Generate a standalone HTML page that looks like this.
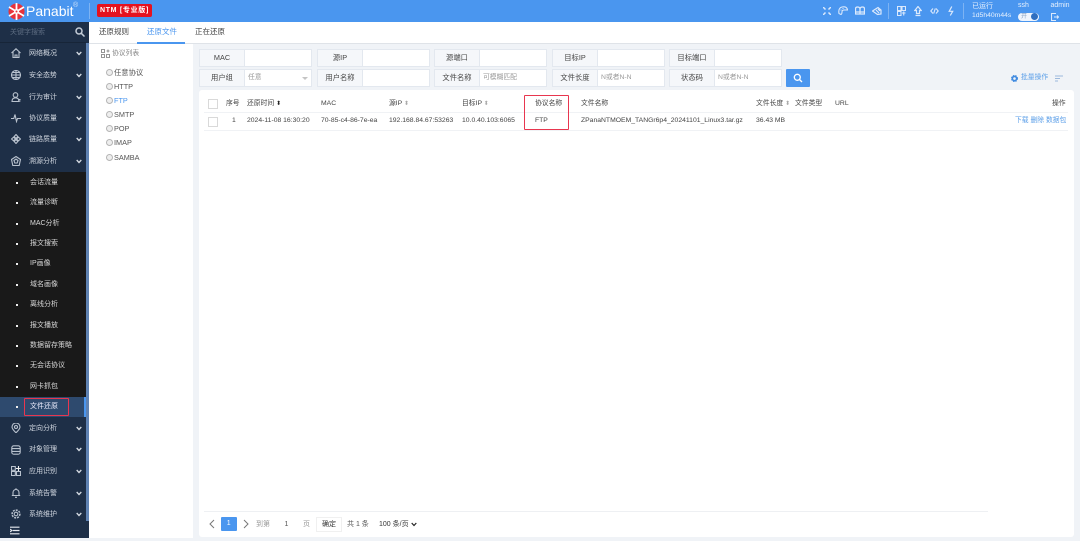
<!DOCTYPE html>
<html lang="zh"><head><meta charset="utf-8"><title>Panabit</title>
<style>
*{box-sizing:border-box}
html,body{margin:0;padding:0;width:1080px;height:541px;overflow:hidden;background:#f0f3f7;font-family:"Liberation Sans","Noto Sans CJK SC",sans-serif;font-size:7.5px;color:#444}
#w{position:absolute;left:0;top:0;width:1080px;height:541px;background:#f0f3f7;overflow:hidden;filter:blur(.35px)}
.a{position:absolute;white-space:nowrap;line-height:1}
.lab{position:absolute;background:#f5f7fa;border:1px solid #e3e8ef;text-align:center;color:#444;font-size:7.3px;width:46px}
.r1{top:49px;height:17.500px;line-height:15.500px}
.r2{top:69px;height:18px;line-height:16px}
.inp{position:absolute;background:#fff;border:1px solid #e3e8ef;color:#999;padding-left:3px;font-size:6.800px;width:68px}
.m{position:absolute;left:29px;color:#d0d6df;font-size:7px;line-height:1;white-space:nowrap}
.s{position:absolute;left:30px;color:#d8d8d8;font-size:7px;line-height:1;white-space:nowrap}
.dot{position:absolute;left:16px;width:2px;height:2px;background:#eee}
.ic{position:absolute;left:11px;width:10px;height:10px;fill:none;stroke:#b9c2ce;stroke-width:1.100}
.ch{position:absolute;left:75.500px;width:6px;height:5px;fill:none;stroke:#d5dbe3;stroke-width:1.300}
.p{position:absolute;left:114px;font-size:7.300px;color:#555;line-height:1}
.pc{position:absolute;left:106px;width:7px;height:7px;border:1px solid #b5b5b5;border-radius:50%;background:#eee}
.th{position:absolute;top:100.500px;font-size:6.800px;color:#444;line-height:1;white-space:nowrap}
.td{position:absolute;top:118.300px;font-size:6.800px;color:#444;line-height:1;white-space:nowrap}
.hi{position:absolute;fill:none;stroke:#dbe9fc;stroke-width:1.100}
.srt{color:#aaa;font-size:6px}
</style></head><body><div id="w">

<!-- header -->
<div class="a" style="left:0;top:0;width:1080px;height:22.500px;background:#4a96ef"></div>
<svg class="a" style="left:8px;top:2.500px" width="17" height="17" viewBox="0 0 17 17">
<circle cx="8.500" cy="8.500" r="8" fill="#e8323c"/>
<path d="M8.500 8.500L8.500 0M8.500 8.500L1 4M8.500 8.500L16 4M8.500 8.500L1 13M8.500 8.500L16 13M8.500 8.500L8.500 17" stroke="#fff" stroke-width="1.800" fill="none"/>
<circle cx="8.500" cy="8.500" r="2.500" fill="#fff"/><circle cx="8.500" cy="8.500" r="1" fill="#e8323c"/></svg>
<div class="a" style="left:26px;top:4px;color:#fff;font-size:14px">Panabit</div>
<div class="a" style="left:73px;top:1.500px;color:#cfe2fa;font-size:7px">®</div>
<div class="a" style="left:89px;top:3px;width:1px;height:16px;background:#7db3f3"></div>
<div class="a" style="left:97px;top:4px;width:55px;height:13px;background:#e5121f;border-radius:2px;color:#fff;font-size:7px;line-height:13px;text-align:center;letter-spacing:.7px;font-weight:bold">NTM [专业版]</div>

<svg class="hi" style="left:823px;top:7px" width="8" height="8" viewBox="0 0 8 8"><path d="M0 0l2.500 2.500M8 0L5.500 2.500M0 8l2.500-2.500M8 8L5.500 5.500" stroke-width="1.500"/></svg>
<svg class="hi" style="left:838px;top:6px" width="10" height="9" viewBox="0 0 10 9"><path d="M1 7.500Q0 2 4 1q5-1 5.500 3H6Q4 4 4 6t-1 2.500z"/><path d="M2.500 4h1M4.500 2.500h1"/></svg>
<svg class="hi" style="left:855px;top:6px" width="10" height="9" viewBox="0 0 10 9"><path d="M.5 8V3Q.5 1 2.500 1 4.500 1 5 2.500 5.500 1 7.500 1 9.500 1 9.500 3v5H.5zM5 2.500V8M.5 6h9" stroke-width="1.300"/></svg>
<svg class="hi" style="left:872px;top:6px" width="10" height="10" viewBox="0 0 10 10"><path d="M.5 5L6 1.500l3 2.500v4L5.500 8.500zM4 4l3 3M6 3l2 2" stroke-width="1.200"/></svg>
<div class="a" style="left:888px;top:3px;width:1px;height:16px;background:#7db3f3"></div>
<svg class="hi" style="left:897px;top:6px" width="9" height="10" viewBox="0 0 9 10"><path d="M.5.500h3.500v4H.5zM5 .5h3.500v4H5zM.5 5.500h3.500V9.500H.5zM5 7h3.500M6.750 5.500v4"/></svg>
<svg class="hi" style="left:914px;top:5.500px" width="8" height="11" viewBox="0 0 8 11"><path d="M4 .5L.8 4.500H2.500V7.500h3V4.500h1.700zM1.500 9.500h5" stroke-width="1.200"/></svg>
<svg class="hi" style="left:930px;top:7px" width="9" height="8" viewBox="0 0 9 8"><path d="M3 1.500L.8 4 3 6.500M6 1.500L8.200 4 6 6.500M5.300 1.500L3.700 6.500"/></svg>
<svg class="hi" style="left:947.500px;top:6px" width="6" height="10" viewBox="0 0 6 10"><path d="M3.800.5L1.200 5.300h3.500L2.300 9.500" stroke-width="1.200"/></svg>
<div class="a" style="left:963px;top:3px;width:1px;height:16px;background:#7db3f3"></div>
<div class="a" style="left:972px;top:2.500px;color:#e6f0fd;font-size:7px">已运行</div>
<div class="a" style="left:972px;top:13.300px;color:#e6f0fd;font-size:6.800px">1d5h40m44s</div>
<div class="a" style="left:1018px;top:1.500px;color:#e6f0fd;font-size:7px">ssh</div>
<div class="a" style="left:1018px;top:13px;width:20.500px;height:7.500px;background:#eef4fd;border-radius:4px"></div>
<div class="a" style="left:1021px;top:13.500px;color:#7f9dc2;font-size:6px">开</div>
<div class="a" style="left:1031px;top:13.300px;width:7px;height:7px;background:#2f6fc0;border-radius:50%"></div>
<div class="a" style="left:1050.500px;top:1.500px;color:#e6f0fd;font-size:7px">admin</div>
<svg class="hi" style="left:1051px;top:12.500px" width="8" height="8" viewBox="0 0 8 8"><path d="M5 .5H.5v7H5M3 4h4.500M6 2.500L7.500 4 6 5.500"/></svg>

<!-- sidebar -->
<div class="a" style="left:0;top:22px;width:89px;height:516px;background:#1e2f47"></div>
<div class="a" style="left:0;top:42px;width:86px;height:1px;background:#172538"></div>
<div class="a" style="left:86px;top:43px;width:3px;height:478px;background:#5f82b2"></div>
<div class="a" style="left:10px;top:28.500px;color:#5c6b80;font-size:7px">关键字搜索</div>
<svg class="a" style="left:74.500px;top:27px" width="10" height="10" viewBox="0 0 10 10" fill="none" stroke="#c5cdd8" stroke-width="1.500"><circle cx="4" cy="4" r="3"/><path d="M6.300 6.300L9.500 9.500"/></svg>

<svg class="ic" style="top:48px" viewBox="0 0 10 10"><path d="M.5 5L5 .8 9.500 5M2 4v5.500h6V4M4 9.500V7h2v2.500"/></svg>
<div class="m" style="top:50px">网络概况</div><svg class="ch" style="top:51px" viewBox="0 0 6 5"><path d="M.7 1L3 3.500 5.300 1"/></svg>
<svg class="ic" style="top:70px" viewBox="0 0 10 10"><circle cx="5" cy="5" r="4.500"/><path d="M.5 5h9M5 .5v9M1.500 2.500h7M1.500 7.500h7"/></svg>
<div class="m" style="top:71.500px">安全态势</div><svg class="ch" style="top:72.500px" viewBox="0 0 6 5"><path d="M.7 1L3 3.500 5.300 1"/></svg>
<svg class="ic" style="top:92px" viewBox="0 0 10 10"><circle cx="4.500" cy="3" r="2.300"/><path d="M1 9.500Q1 5.800 4.500 5.800T8 9.500zM7 7.500h2.500M7 9h2.500"/></svg>
<div class="m" style="top:93.500px">行为审计</div><svg class="ch" style="top:94.500px" viewBox="0 0 6 5"><path d="M.7 1L3 3.500 5.300 1"/></svg>
<svg class="ic" style="top:113px" viewBox="0 0 10 10"><path d="M0 5.500h2.800L4 1.500l1.500 7 1-3H10"/></svg>
<div class="m" style="top:114.500px">协议质量</div><svg class="ch" style="top:115.500px" viewBox="0 0 6 5"><path d="M.7 1L3 3.500 5.300 1"/></svg>
<svg class="ic" style="top:134px" viewBox="0 0 10 10"><path d="M5 .5l1.800 2L5 4.500 3.200 2.500zM.5 5l2-1.800L4.500 5 2.500 6.800zM9.500 5l-2-1.800L5.500 5l2 1.800zM5 9.500l1.800-2L5 5.500 3.200 7.500z"/></svg>
<div class="m" style="top:136px">链路质量</div><svg class="ch" style="top:137px" viewBox="0 0 6 5"><path d="M.7 1L3 3.500 5.300 1"/></svg>
<svg class="ic" style="top:156px" viewBox="0 0 10 10"><path d="M5 .5l4.500 3-1.300 6H1.800L.5 3.500z"/><path d="M3 4.500l2-1.500 2 1.500-.8 2.500H3.800z"/></svg>
<div class="m" style="top:157.500px">溯源分析</div><svg class="ch" style="top:158.500px" viewBox="0 0 6 5"><path d="M.7 1L3 3.500 5.300 1"/></svg>

<div class="a" style="left:0;top:172px;width:86px;height:224.500px;background:#191919"></div>
<div class="dot" style="top:182px"></div><div class="s" style="top:179px">会话流量</div>
<div class="dot" style="top:202px"></div><div class="s" style="top:199px">流量诊断</div>
<div class="dot" style="top:223px"></div><div class="s" style="top:220px">MAC分析</div>
<div class="dot" style="top:243px"></div><div class="s" style="top:240px">报文搜索</div>
<div class="dot" style="top:263px"></div><div class="s" style="top:260px">IP画像</div>
<div class="dot" style="top:284px"></div><div class="s" style="top:281px">域名画像</div>
<div class="dot" style="top:304px"></div><div class="s" style="top:301px">离线分析</div>
<div class="dot" style="top:325px"></div><div class="s" style="top:322px">报文播放</div>
<div class="dot" style="top:345px"></div><div class="s" style="top:342px">数据留存策略</div>
<div class="dot" style="top:365px"></div><div class="s" style="top:362px">无会话协议</div>
<div class="dot" style="top:386px"></div><div class="s" style="top:383px">网卡抓包</div>
<div class="a" style="left:0;top:396.500px;width:85px;height:20px;background:#2e4a6e"></div>
<div class="a" style="left:84px;top:396.500px;width:1.500px;height:20px;background:#4a96ef"></div>
<div class="dot" style="top:406px"></div><div class="s" style="top:403px;color:#eef">文件还原</div>
<div class="a" style="left:23.500px;top:398px;width:45px;height:18px;border:1.500px solid #e8364f;border-radius:1px"></div>

<svg class="ic" style="top:422.500px" viewBox="0 0 10 10"><path d="M5 9.800Q1 6 1 4a4 4 0 0 1 8 0Q9 6 5 9.800z"/><circle cx="5" cy="4" r="1.500"/></svg>
<div class="m" style="top:424.500px">定向分析</div><svg class="ch" style="top:425.500px" viewBox="0 0 6 5"><path d="M.7 1L3 3.500 5.300 1"/></svg>
<svg class="ic" style="top:444.500px" viewBox="0 0 10 10"><rect x=".8" y=".8" width="8.400" height="8.400" rx="2"/><path d="M.8 3.600h8.400M.8 6.400h8.400"/></svg>
<div class="m" style="top:446px">对象管理</div><svg class="ch" style="top:447px" viewBox="0 0 6 5"><path d="M.7 1L3 3.500 5.300 1"/></svg>
<svg class="ic" style="top:466px" viewBox="0 0 10 10"><path d="M.5.500h3.800v3.800H.5zM.5 5.500h3.800v4H.5zM5.500 5.500h4v4h-4z"/><path d="M7.500 0v5M5 2.500h5" stroke="#eee"/></svg>
<div class="m" style="top:467.500px">应用识别</div><svg class="ch" style="top:468.500px" viewBox="0 0 6 5"><path d="M.7 1L3 3.500 5.300 1"/></svg>
<svg class="ic" style="top:488px" viewBox="0 0 10 10"><path d="M2 7.500V4.500a3 3 0 0 1 6 0v3zM.8 7.500h8.400M4 9.300h2M5 .3v1"/></svg>
<div class="m" style="top:489.500px">系统告警</div><svg class="ch" style="top:490.500px" viewBox="0 0 6 5"><path d="M.7 1L3 3.500 5.300 1"/></svg>
<svg class="ic" style="top:509px" viewBox="0 0 10 10"><circle cx="5" cy="5" r="1.800"/><circle cx="5" cy="5" r="3.900" stroke-width="1.500" stroke-dasharray="2 1"/></svg>
<div class="m" style="top:510.500px">系统维护</div><svg class="ch" style="top:511.500px" viewBox="0 0 6 5"><path d="M.7 1L3 3.500 5.300 1"/></svg>
<svg class="a" style="left:10px;top:526px" width="9.500" height="9" viewBox="0 0 10 9" fill="none" stroke="#e6eaf0" stroke-width="1.200"><path d="M0 1h10M3 4.500h7M0 8h10M0 3l2 1.500L0 6"/></svg>

<!-- tabs bar -->
<div class="a" style="left:89px;top:22px;width:991px;height:21.500px;background:#fff;border-bottom:1px solid #dfe3e8"></div>
<div class="a" style="left:99px;top:28px;font-size:7.500px;color:#444">还原规则</div>
<div class="a" style="left:147px;top:28px;font-size:7.500px;color:#4a96ef">还原文件</div>
<div class="a" style="left:195px;top:28px;font-size:7.500px;color:#444">正在还原</div>
<div class="a" style="left:137px;top:42px;width:48px;height:1.500px;background:#4a96ef"></div>

<!-- protocol list -->
<div class="a" style="left:89px;top:43.500px;width:104px;height:494px;background:#fff"></div>
<svg class="a" style="left:101px;top:49px" width="9" height="9" viewBox="0 0 9 9" fill="none" stroke="#777" stroke-width=".8"><path d="M.5.500h3v3h-3zM.5 5.500h3v3h-3zM5.500 5.500h3v3h-3zM7 .5v3M5.500 2h3"/></svg>
<div class="a" style="left:112px;top:51px;font-size:6.800px;color:#888">协议列表</div>
<div class="pc" style="top:69px"></div><div class="p" style="top:69px">任意协议</div>
<div class="pc" style="top:83px"></div><div class="p" style="top:83px">HTTP</div>
<div class="pc" style="top:97px"></div><div class="p" style="top:97px;color:#4a96ef">FTP</div>
<div class="pc" style="top:111px"></div><div class="p" style="top:111px">SMTP</div>
<div class="pc" style="top:125px"></div><div class="p" style="top:125px">POP</div>
<div class="pc" style="top:139px"></div><div class="p" style="top:139px">IMAP</div>
<div class="pc" style="top:153.500px"></div><div class="p" style="top:153.500px">SAMBA</div>

<!-- filters row 1 -->
<div class="lab r1" style="left:199px">MAC</div><div class="inp r1" style="left:244px"></div>
<div class="lab r1" style="left:317px">源IP</div><div class="inp r1" style="left:362px"></div>
<div class="lab r1" style="left:434px">源端口</div><div class="inp r1" style="left:479px"></div>
<div class="lab r1" style="left:552px">目标IP</div><div class="inp r1" style="left:597px"></div>
<div class="lab r1" style="left:669px">目标端口</div><div class="inp r1" style="left:714px"></div>
<!-- filters row 2 -->
<div class="lab r2" style="left:199px">用户组</div><div class="inp r2" style="left:244px">任意</div>
<div class="a" style="left:302px;top:77px;width:0;height:0;border-left:3px solid transparent;border-right:3px solid transparent;border-top:3px solid #c4c4c4"></div>
<div class="lab r2" style="left:317px">用户名称</div><div class="inp r2" style="left:362px"></div>
<div class="lab r2" style="left:434px">文件名称</div><div class="inp r2" style="left:479px">可模糊匹配</div>
<div class="lab r2" style="left:552px">文件长度</div><div class="inp r2" style="left:597px">N或者N-N</div>
<div class="lab r2" style="left:669px">状态码</div><div class="inp r2" style="left:714px">N或者N-N</div>
<div class="a" style="left:786px;top:69px;width:24px;height:18px;background:#4a96ef;border-radius:1px"></div>
<svg class="a" style="left:793px;top:73px" width="10" height="10" viewBox="0 0 10 10" fill="none" stroke="#fff" stroke-width="1.300"><circle cx="4.300" cy="4.300" r="3"/><path d="M6.500 6.500L9 9"/></svg>

<svg class="a" style="left:1010.500px;top:74.500px" width="7" height="7" viewBox="0 0 8 8"><circle cx="4" cy="4" r="2.500" fill="none" stroke="#3f8ae0" stroke-width="2"/><circle cx="4" cy="4" r="3.700" fill="none" stroke="#3f8ae0" stroke-width=".8" stroke-dasharray="1.500 1.500"/></svg>
<div class="a" style="left:1021px;top:75px;font-size:6.800px;color:#5a9ee8">批量操作</div>
<svg class="a" style="left:1054.500px;top:75px" width="8" height="7" viewBox="0 0 8 7" fill="none" stroke="#9db9dc"><path d="M0 1h8M0 3.500h5M0 6h3"/></svg>

<!-- table card -->
<div class="a" style="left:199px;top:90px;width:874.500px;height:446.500px;background:#fff;border-radius:3px"></div>
<div class="a" style="left:204px;top:112px;width:864px;height:1px;background:#f0f2f5"></div>
<div class="a" style="left:204px;top:130px;width:864px;height:1px;background:#f0f2f5"></div>
<div class="a" style="left:204px;top:511px;width:784px;height:1px;background:#eef0f3"></div>
<div class="a" style="left:208px;top:99px;width:10px;height:10px;border:1px solid #d9d9d9;background:#fff"></div>
<div class="a" style="left:208px;top:117px;width:10px;height:10px;border:1px solid #d9d9d9;background:#fff"></div>
<div class="th" style="left:226px">序号</div>
<div class="th" style="left:247px">还原时间 <span style="color:#222;font-size:6px">⬍</span></div>
<div class="th" style="left:321px">MAC</div>
<div class="th" style="left:389px">源IP <span class="srt">⬍</span></div>
<div class="th" style="left:462px">目标IP <span class="srt">⬍</span></div>
<div class="th" style="left:535px">协议名称</div>
<div class="th" style="left:581px">文件名称</div>
<div class="th" style="left:756px">文件长度 <span class="srt">⬍</span></div>
<div class="th" style="left:795px">文件类型</div>
<div class="th" style="left:835px">URL</div>
<div class="th" style="left:1052px">操作</div>
<div class="td" style="left:232px">1</div>
<div class="td" style="left:247px">2024-11-08 16:30:20</div>
<div class="td" style="left:321px">70-85-c4-86-7e-ea</div>
<div class="td" style="left:389px">192.168.84.67:53263</div>
<div class="td" style="left:462px">10.0.40.103:6065</div>
<div class="td" style="left:535px">FTP</div>
<div class="td" style="left:581px">ZPanaNTMOEM_TANGr6p4_20241101_Linux3.tar.gz</div>
<div class="td" style="left:756px">36.43 MB</div>
<div class="td" style="left:1015px;color:#5a9ee8">下载 删除 数据包</div>
<div class="a" style="left:524px;top:95px;width:45px;height:35px;border:1.500px solid #e8364f;border-radius:1px"></div>

<!-- pagination -->
<svg class="a" style="left:208px;top:519px" width="8" height="10" viewBox="0 0 8 10" fill="none" stroke="#777"><path d="M6 1L2 5l4 4"/></svg>
<div class="a" style="left:221px;top:517px;width:15.500px;height:14px;background:#4a96ef;color:#fff;text-align:center;line-height:14px;font-size:7px;border-radius:1px">1</div>
<svg class="a" style="left:242px;top:519px" width="8" height="10" viewBox="0 0 8 10" fill="none" stroke="#777"><path d="M2 1l4 4-4 4"/></svg>
<div class="a" style="left:256px;top:520.500px;color:#999;font-size:7px">到第</div>
<div class="a" style="left:284.500px;top:520.500px;color:#555;font-size:7px">1</div>
<div class="a" style="left:303px;top:520.500px;color:#999;font-size:7px">页</div>
<div class="a" style="left:316px;top:517px;width:26px;height:15px;border:1px solid #f0f0f0;text-align:center;line-height:14px;color:#333;font-size:7px">确定</div>
<div class="a" style="left:347px;top:520.500px;color:#555;font-size:7px">共 1 条</div>
<div class="a" style="left:379px;top:520.500px;color:#333;font-size:7px">100 条/页</div>
<svg class="a" style="left:410.500px;top:521.500px" width="6" height="5" viewBox="0 0 6 5" fill="none" stroke="#222" stroke-width="1.200"><path d="M.7 1L3 3.500 5.300 1"/></svg>
</div></body></html>
